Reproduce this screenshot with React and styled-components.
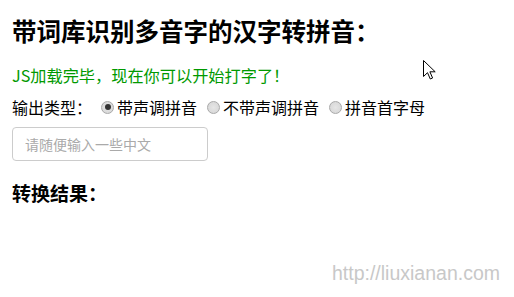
import React, { useState } from 'react';
import styled, { createGlobalStyle } from 'styled-components';

const GlobalStyle = createGlobalStyle`
  html, body {
    margin: 0;
    padding: 0;
    background: #fff;
  }
  body {
    font-family: "Microsoft YaHei", "Noto Sans CJK SC", "Noto Sans", sans-serif;
    color: #000;
  }
`;

const options = [
  { value: 'tone', label: '带声调拼音' },
  { value: 'plain', label: '不带声调拼音' },
  { value: 'first', label: '拼音首字母' },
];

const App = () => {
  const [type, setType] = useState('tone');
  const [text, setText] = useState('');

  return (
    <Page>
      <GlobalStyle />
      <Title>带词库识别多音字的汉字转拼音：</Title>
      <Status>JS加载完毕，现在你可以开始打字了！</Status>
      <TypeRow>
        <span>输出类型：</span>
        {options.map((o) => (
          <Option key={o.value}>
            <Radio
              type='radio'
              name='type'
              checked={type === o.value}
              onChange={() => setType(o.value)}
            />
            {o.label}
          </Option>
        ))}
      </TypeRow>
      <Input
        placeholder='请随便输入一些中文'
        value={text}
        onChange={(e) => setText(e.target.value)}
      />
      <ResultTitle>转换结果：</ResultTitle>
      <Watermark>http://liuxianan.com</Watermark>
      <Cursor width='13' height='20' viewBox='0 0 13 20'>
        <path
          d='M0.5 0.5 L0.5 16.5 L4.5 12.7 L7.3 19 L9.6 18 L6.9 11.8 L12.2 11.8 Z'
          fill='#fff'
          stroke='#000'
          strokeWidth='1'
          strokeLinejoin='miter'
        />
      </Cursor>
    </Page>
  );
};

export default App;

const Page = styled.div`
  position: relative;
  width: 514px;
  height: 297px;
  padding: 0 12px;
  box-sizing: border-box;
  overflow: hidden;
`;

const Title = styled.h2`
  margin: 0;
  padding-top: 15px;
  font-size: 24.5px;
  line-height: 32px;
  font-weight: bold;
`;

const Status = styled.div`
  margin-top: 17px;
  font-size: 16.2px;
  line-height: 22px;
  color: #009900;
`;

const TypeRow = styled.div`
  display: flex;
  align-items: center;
  margin-top: 10px;
  font-size: 16px;
  line-height: 22px;

  > span {
    margin-right: 4px;
  }
`;

const Option = styled.label`
  display: flex;
  align-items: center;
  margin-right: 5px;
  cursor: pointer;
`;

const Radio = styled.input`
  appearance: none;
  width: 13px;
  height: 13px;
  margin: 0 3px 0 5px;
  border-radius: 50%;
  border: 1px solid #a9a9a9;
  box-sizing: border-box;
  background: radial-gradient(circle, #e6e6e6 0%, #d4d4d4 100%);
  position: relative;

  &:checked::after {
    content: '';
    position: absolute;
    left: 2.5px;
    top: 2.5px;
    width: 6px;
    height: 6px;
    border-radius: 50%;
    background: #333;
  }
`;

const Input = styled.input`
  display: block;
  margin-top: 9px;
  width: 196px;
  height: 34px;
  box-sizing: border-box;
  padding: 0 12px;
  border: 1px solid #ccc;
  border-radius: 4px;
  font-family: inherit;
  font-size: 14px;
  color: #333;
  outline: none;

  &::placeholder {
    color: #aaa;
  }
`;

const ResultTitle = styled.h3`
  margin: 0;
  margin-top: 19px;
  font-size: 19px;
  line-height: 26px;
  font-weight: bold;
`;

const Watermark = styled.div`
  position: absolute;
  right: 14px;
  bottom: 12px;
  font-family: "Liberation Sans", Arial, sans-serif;
  font-size: 19.5px;
  color: #c8c8c8;
`;

const Cursor = styled.svg`
  position: absolute;
  left: 423px;
  top: 60px;
`;
